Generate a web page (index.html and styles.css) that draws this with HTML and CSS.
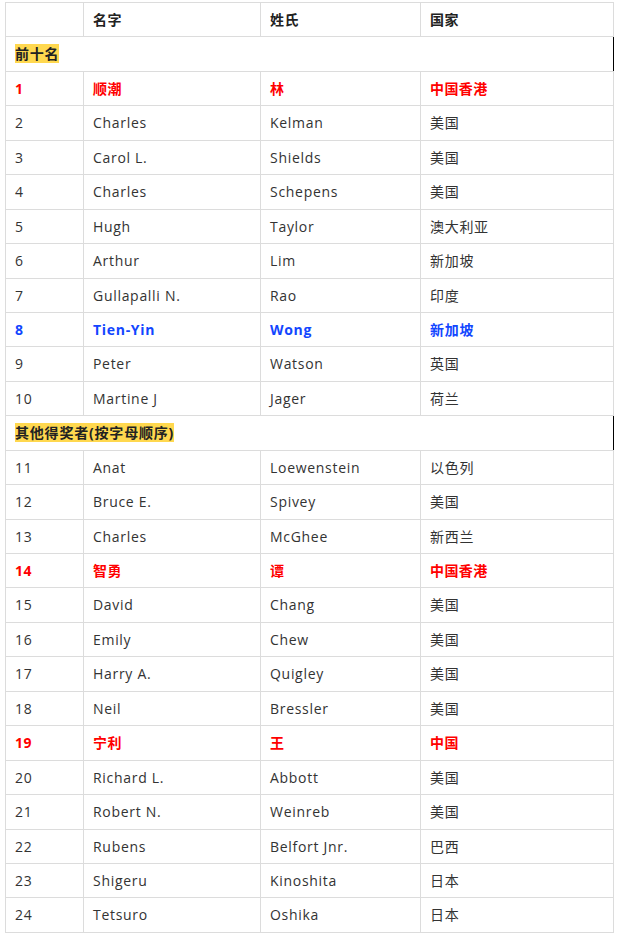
FILE: index.html
```html
<!DOCTYPE html>
<html lang="zh">
<head>
<meta charset="utf-8">
<title>获奖名单</title>
<link rel="stylesheet" href="styles.css">
</head>
<body>
<table class="awards">
  <colgroup>
    <col class="c-rank"><col class="c-first"><col class="c-last"><col class="c-country">
  </colgroup>
  <thead>
    <tr><th></th><th>名字</th><th>姓氏</th><th>国家</th></tr>
  </thead>
  <tbody>
    <tr class="section"><td colspan="4"><span class="mark">前十名</span></td></tr>
    <tr class="hl-red"><td>1</td><td>顺潮</td><td>林</td><td>中国香港</td></tr>
    <tr><td>2</td><td>Charles</td><td>Kelman</td><td>美国</td></tr>
    <tr><td>3</td><td>Carol L.</td><td>Shields</td><td>美国</td></tr>
    <tr><td>4</td><td>Charles</td><td>Schepens</td><td>美国</td></tr>
    <tr><td>5</td><td>Hugh</td><td>Taylor</td><td>澳大利亚</td></tr>
    <tr><td>6</td><td>Arthur</td><td>Lim</td><td>新加坡</td></tr>
    <tr><td>7</td><td>Gullapalli N.</td><td>Rao</td><td>印度</td></tr>
    <tr class="hl-blue"><td>8</td><td>Tien-Yin</td><td>Wong</td><td>新加坡</td></tr>
    <tr><td>9</td><td>Peter</td><td>Watson</td><td>英国</td></tr>
    <tr><td>10</td><td>Martine J</td><td>Jager</td><td>荷兰</td></tr>
    <tr class="section"><td colspan="4"><span class="mark">其他得奖者(按字母顺序)</span></td></tr>
    <tr><td>11</td><td>Anat</td><td>Loewenstein</td><td>以色列</td></tr>
    <tr><td>12</td><td>Bruce E.</td><td>Spivey</td><td>美国</td></tr>
    <tr><td>13</td><td>Charles</td><td>McGhee</td><td>新西兰</td></tr>
    <tr class="hl-red"><td>14</td><td>智勇</td><td>谭</td><td>中国香港</td></tr>
    <tr><td>15</td><td>David</td><td>Chang</td><td>美国</td></tr>
    <tr><td>16</td><td>Emily</td><td>Chew</td><td>美国</td></tr>
    <tr><td>17</td><td>Harry A.</td><td>Quigley</td><td>美国</td></tr>
    <tr><td>18</td><td>Neil</td><td>Bressler</td><td>美国</td></tr>
    <tr class="hl-red"><td>19</td><td>宁利</td><td>王</td><td>中国</td></tr>
    <tr><td>20</td><td>Richard L.</td><td>Abbott</td><td>美国</td></tr>
    <tr><td>21</td><td>Robert N.</td><td>Weinreb</td><td>美国</td></tr>
    <tr><td>22</td><td>Rubens</td><td>Belfort Jnr.</td><td>巴西</td></tr>
    <tr><td>23</td><td>Shigeru</td><td>Kinoshita</td><td>日本</td></tr>
    <tr><td>24</td><td>Tetsuro</td><td>Oshika</td><td>日本</td></tr>
  </tbody>
</table>
</body>
</html>
```

FILE: styles.css
```css
html, body {
  margin: 0;
  padding: 0;
  background: #fff;
}
body {
  padding: 2px 0 0 5px;
  font-family: "Open Sans", "Noto Sans CJK SC", sans-serif;
  font-size: 14px;
  color: #333;
}
.awards {
  border-collapse: collapse;
  width: 609px;
  table-layout: fixed;
}
.c-rank { width: 78px; }
.c-first { width: 177px; }
.c-last { width: 160px; }
.c-country { width: 193px; }
.awards th,
.awards td {
  border: 1px solid #dcdcdc;
  padding: 7px 9px;
  line-height: 19.44px;
  text-align: left;
  vertical-align: middle;
  letter-spacing: 0.7px;
  white-space: nowrap;
}
.awards th {
  font-weight: bold;
  color: #222;
  letter-spacing: 0.4px;
}
.section td {
  border-right: 1px solid #000;
  font-weight: bold;
  color: #222;
  letter-spacing: 0.8px;
}
.mark {
  background: #ffd84f;
}
.hl-red td {
  color: #ff0000;
  font-weight: bold;
  letter-spacing: 0.4px;
}
.hl-blue td {
  color: #1246ff;
  font-weight: bold;
}
```
